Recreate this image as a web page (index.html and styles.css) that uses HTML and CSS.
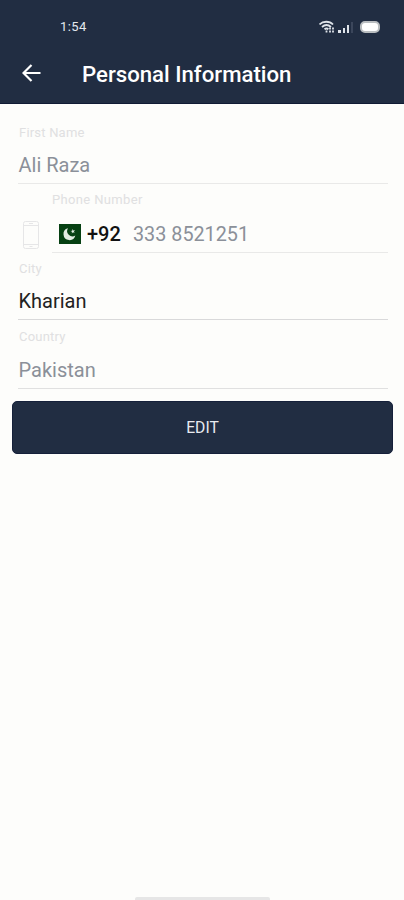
FILE: index.html
```html
<!DOCTYPE html>
<html lang="en">
<head>
  <meta charset="UTF-8">
  <meta name="viewport" content="width=device-width, initial-scale=1">
  <title>Personal Information</title>
  <link rel="stylesheet" href="styles.css">
</head>
<body>

  <header>
    <div class="status-bar">
      <span class="time">1:54</span>
      <div class="status-icons">
        <svg class="wifi" width="16" height="14" viewBox="0 0 16 14" fill="none" stroke="#dfe4ea" stroke-width="1.8">
          <path d="M0.500 4.500C4 0.800 10.500 0.800 14 4.500M3 7C5.800 4.500 9.200 4.500 12 7M5.500 9.300C6.800 8.300 8.200 8.300 9.400 9.300"/>
          <path d="M7.500 10.500v2M11 7.500v5M14 7.500v5" stroke-dasharray="2 1"/>
        </svg>
        <svg class="signal" width="16" height="12" viewBox="0 0 16 12">
          <path fill="#dfe4ea" d="M0 9h3v3H0zM5 7h2v5H5zM9 4h2v8H9z"/>
          <path fill="#3b465b" d="M13 1h2v11h-2z"/>
        </svg>
        <span class="battery"></span>
      </div>
    </div>
    <div class="toolbar">
      <svg class="back" width="20" height="18" viewBox="0 0 20 18" fill="none" stroke="#fff" stroke-width="2.200">
        <path d="M18.500 9H2M9.500 1L1.500 9l8 8"/>
      </svg>
      <h1>Personal Information</h1>
    </div>
  </header>

  <main>
    <div class="field">
      <label>First Name</label>
      <div class="value">Ali Raza</div>
    </div>

    <div class="phone-row">
      <svg class="phone-icon" width="18" height="30" viewBox="0 0 18 30" fill="none" stroke="#e6e6e7">
        <rect x="1.500" y="1.500" width="15" height="27" rx="2"/>
        <path d="M1.500 5.500h15M1.500 24.500h15M7 3.500h4M7.500 26.500h3"/>
      </svg>
      <div class="field phone">
        <label>Phone Number</label>
        <div class="value">
          <svg class="flag" width="22" height="20" viewBox="0 0 22 20">
            <path fill="#064012" d="M0 0h22v20H0z"/>
            <path fill="#e3ece2" d="M9 4.300A6 6 0 1 0 16.300 11.600A5.300 5.300 0 0 1 9 4.300z"/>
            <path fill="#e3ece2" d="M13.600 5l.8 1.500 1.700-.2-1.200 1.200.7 1.500-1.600-.7-1.200 1.200.2-1.700-1.500-.8 1.700-.3z"/>
          </svg>
          <span class="code">+92</span>
          <span class="number">333 8521251</span>
        </div>
      </div>
    </div>

    <div class="field city">
      <label>City</label>
      <div class="value">Kharian</div>
    </div>

    <div class="field country">
      <label>Country</label>
      <div class="value">Pakistan</div>
    </div>

    <button>EDIT</button>
  </main>

  <div class="home-bar"></div>

</body>
</html>
```
FILE: styles.css
```css
* {
  box-sizing: border-box;
}
body {
  margin: 0;
  height: 900px;
  display: flex;
  flex-direction: column;
  font-family: Roboto, "Liberation Sans", sans-serif;
  background: #fdfdfb;
}
header {
  height: 104px;
  background: #212d42;
  border-bottom: 1px solid #101b34;
  color: #fff;
}
.status-bar {
  display: flex;
  justify-content: space-between;
  align-items: center;
  height: 43px;
  padding: 10px 24px 0 60px;
}
.time {
  font-size: 13px;
  letter-spacing: 0.4px;
  color: #e4e8ee;
}
.status-icons {
  display: flex;
  align-items: center;
}
.wifi {
  margin-right: 3px;
}
.signal {
  margin-right: 6px;
}
.battery {
  width: 20px;
  height: 12px;
  background: #fff;
  border: 2px solid #b9bdc0;
  border-radius: 5px;
}
.toolbar {
  display: flex;
  align-items: center;
  height: 61px;
  padding-left: 22px;
}
.back {
  margin-bottom: 2px;
}
h1 {
  margin: 0 0 0 40px;
  font-size: 22.2px;
  font-weight: 500;
  white-space: nowrap;
}
main {
  flex: 1;
  padding: 12px 11px 0 12px;
}
.field {
  display: flex;
  flex-direction: column;
  height: 68px;
  margin: 0 5px 0 6px;
  padding: 9px 0 6px;
  border-bottom: 1px solid #e9e9e8;
}
label {
  padding-left: 1px;
  font-size: 13px;
  letter-spacing: 0.2px;
  line-height: 16px;
  color: #e0e0e1;
}
.value {
  display: flex;
  align-items: center;
  height: 24px;
  margin-top: auto;
  padding-left: 0.5px;
  font-size: 20px;
  color: #8b9099;
  white-space: nowrap;
}
.phone-row {
  display: flex;
  align-items: flex-end;
  height: 69px;
  padding-left: 10px;
}
.phone-icon {
  margin-bottom: 3px;
}
.phone {
  flex: 1;
  height: 69px;
  margin-left: 12px;
  padding-top: 8px;
}
.phone label,
.phone .value {
  padding-left: 0;
}
.phone label {
  letter-spacing: 0.35px;
}
.flag {
  margin: 0 6px 0 7px;
}
.code {
  width: 46px;
  font-weight: 500;
  color: #111;
}
.number {
  font-size: 19.8px;
}
.city {
  height: 67px;
  padding-top: 8px;
  border-color: #d9d9da;
}
.city .value {
  color: #222;
}
.country {
  height: 69px;
  border-color: #e0e0e0;
}
button {
  display: block;
  width: 100%;
  height: 53px;
  margin-top: 12px;
  border: 1px solid #15203a;
  border-radius: 5px;
  background: #212d42;
  color: #e8ebf0;
  font-family: inherit;
  font-size: 15.7px;
}
.home-bar {
  width: 135px;
  height: 3px;
  margin: 0 auto;
  background: #e6e6e6;
  border-radius: 2px 2px 0 0;
}
```
